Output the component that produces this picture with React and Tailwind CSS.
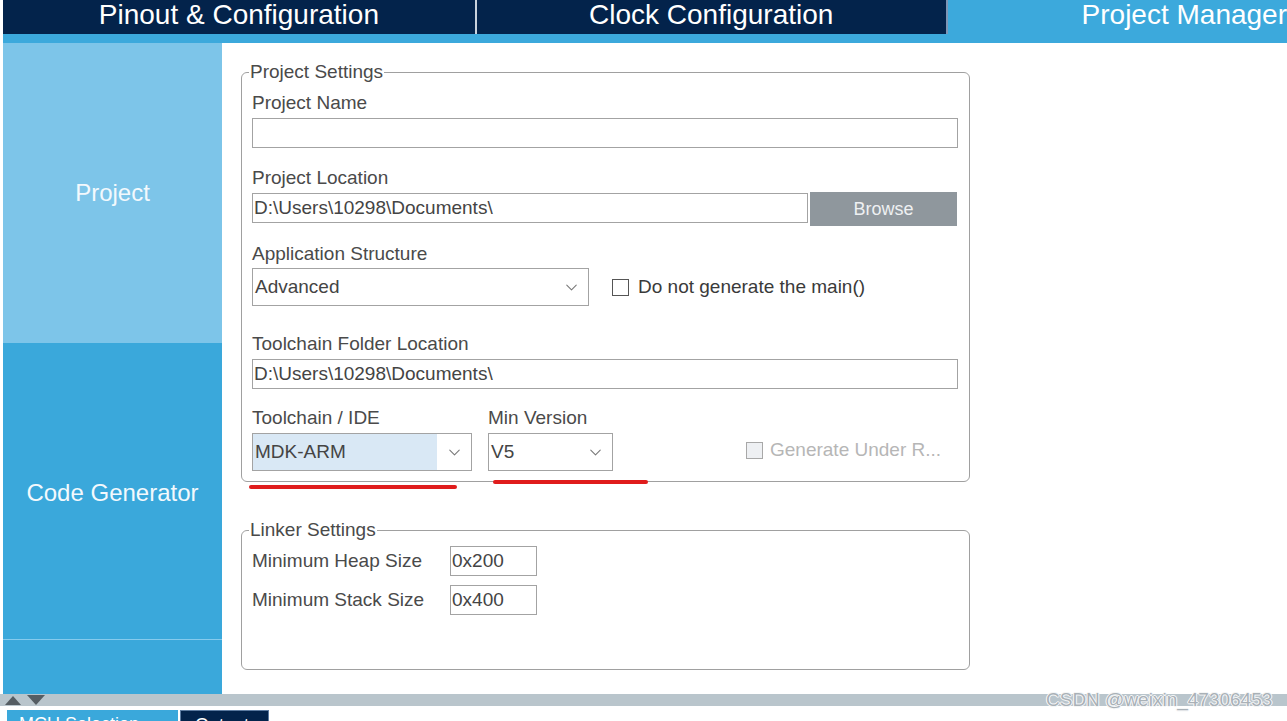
import { ChevronDown } from 'lucide-react'

const font = { fontFamily: '"Liberation Sans", Arial, sans-serif' }

const Field = ({ value = '', className = '' }) => (
  <div className={`h-[30px] border border-[#a3a3a3] bg-white flex items-center px-[1px] text-[19px] text-[#444] ${className}`}>
    {value}
  </div>
)

const Select = ({ value, className = '', fill = '' }) => (
  <div className={`h-[38px] border border-[#a3a3a3] bg-white flex items-stretch text-[19px] text-[#444] ${className}`}>
    <div className={`flex-1 flex items-center pl-[2px] ${fill}`}>{value}</div>
    <div className="w-[34px] flex items-center justify-center">
      <ChevronDown className="w-[19px] h-[19px] text-[#777]" strokeWidth={1.3} />
    </div>
  </div>
)

const Label = ({ children, className = '' }) => (
  <div className={`text-[19px] leading-[22px] text-[#4a4a4a] ${className}`}>{children}</div>
)

export default function App() {
  return (
    <div className="w-[1287px] h-[721px] overflow-hidden relative bg-white flex flex-col" style={font}>
      {/* Top tabs */}
      <div className="flex flex-col pl-[3px] shrink-0">
        <div className="flex h-[34px]">
          <div className="w-[472px] bg-[#03234b] text-white text-[28px] flex items-center justify-center leading-none pb-[5px]">
            Pinout &amp; Configuration
          </div>
          <div className="w-[2px] bg-[#c9d2dc]" />
          <div className="w-[471px] bg-[#03234b] text-white text-[28px] flex items-center justify-center leading-none pb-[5px] border-r-2 border-[#7d95b5]">
            Clock Configuration
          </div>
          <div className="flex-1 bg-[#3ca9dc] text-white text-[28px] flex items-center leading-none pl-[134px] pb-[5px] whitespace-nowrap">
            Project Manager
          </div>
        </div>
        <div className="h-[9px] bg-[#3ca9dc]" />
      </div>

      {/* Body */}
      <div className="flex h-[651px] shrink-0 pl-[3px]">
        {/* Sidebar */}
        <div className="w-[219px] flex flex-col">
          <div className="h-[300px] bg-[#7dc5e9] flex items-center justify-center text-[24px] text-[#f3f9fd]">
            Project
          </div>
          <div className="h-[296px] bg-[#3aa8db] flex items-center justify-center text-[24px] text-[#f3f9fd] pt-[4px]">
            Code Generator
          </div>
          <div className="h-[1px] bg-[#86cbed]" />
          <div className="flex-1 bg-[#3aa8db]" />
        </div>

        {/* Main */}
        <div className="flex-1 pl-[19px] pt-[18px]">
          <fieldset className="w-[729px] h-[421px] border border-[#a0a0a0] rounded-[6px] pl-[10px] pr-[11px] m-0 relative">
            <legend className="text-[19px] leading-[22px] text-[#4a4a4a] px-[1px] ml-[-3px]">Project Settings</legend>

            <Label className="mt-[9px]">Project Name</Label>
            <Field className="mt-[4px]" />

            <Label className="mt-[19px]">Project Location</Label>
            <div className="flex mt-[4px] items-start">
              <Field value="D:\Users\10298\Documents\" className="w-[556px]" />
              <div className="w-[147px] h-[34px] ml-[2px] mt-[-1px] bg-[#8f979d] text-[#eef0f2] text-[18px] flex items-center justify-center">
                Browse
              </div>
            </div>

            <Label className="mt-[17px]">Application Structure</Label>
            <div className="flex items-center mt-[3px]">
              <Select value="Advanced" className="w-[337px]" />
              <div className="ml-[23px] w-[17px] h-[17px] border border-[#555] bg-white" />
              <div className="ml-[9px] text-[19px] text-[#3a3a3a]">Do not generate the main()</div>
            </div>

            <Label className="mt-[27px]">Toolchain Folder Location</Label>
            <Field value="D:\Users\10298\Documents\" className="mt-[4px]" />

            <div className="flex mt-[18px]">
              <div className="flex flex-col">
                <Label>Toolchain / IDE</Label>
                <Select value="MDK-ARM" className="w-[220px] mt-[4px]" fill="bg-[#d9e8f5]" />
              </div>
              <div className="flex flex-col ml-[16px]">
                <Label>Min Version</Label>
                <Select value="V5" className="w-[125px] mt-[4px]" />
              </div>
              <div className="flex items-center ml-[133px] mt-[24px] h-[38px]">
                <div className="w-[17px] h-[17px] border border-[#a8a8a8] bg-[#eef0f3]" />
                <div className="ml-[7px] text-[19px] text-[#b6b6b6] whitespace-nowrap">Generate Under R...</div>
              </div>
            </div>
          </fieldset>

          <fieldset className="w-[729px] h-[151px] mt-[37px] border border-[#a0a0a0] rounded-[6px] pl-[10px] m-0">
            <legend className="text-[19px] leading-[22px] text-[#4a4a4a] px-[1px] ml-[-3px]">Linker Settings</legend>
            <div className="flex items-center mt-[5px]">
              <Label className="w-[198px]">Minimum Heap Size</Label>
              <Field value="0x200" className="w-[87px] h-[29px]" />
            </div>
            <div className="flex items-center mt-[9px]">
              <Label className="w-[198px]">Minimum Stack Size</Label>
              <Field value="0x400" className="w-[87px] h-[29px]" />
            </div>
          </fieldset>
        </div>
      </div>

      {/* Bottom gray bar */}
      <div className="h-[12px] bg-[#b9c5cc] flex items-center pl-[5px] gap-[6px] shrink-0">
        <svg width="16" height="10" viewBox="0 0 16 10"><path d="M0 10 L8 1 L16 10 Z" fill="#555d63" /></svg>
        <svg width="18" height="10" viewBox="0 0 18 10"><path d="M0 0 L18 0 L9 10 Z" fill="#555d63" /></svg>
      </div>
      <div className="h-[4px] shrink-0" />
      <div className="flex pl-[7px] h-[20px] shrink-0">
        <div className="w-[171px] bg-[#3aa8db] text-white text-[18px] leading-none pt-[5px] pl-[12px] whitespace-nowrap">MCU Selection</div>
        <div className="w-[89px] ml-[2px] bg-[#03234b] border border-[#5b7aa0] text-white text-[18px] leading-none pt-[5px] pl-[14px]">Output</div>
      </div>

      {/* Red annotation marks */}
      <div className="absolute left-[249px] top-[485px] w-[208px] h-[4px] rounded-full bg-[#e01c1c]" />
      <div className="absolute left-[493px] top-[480px] w-[155px] h-[4px] rounded-full bg-[#e01c1c]" />

      {/* Watermark */}
      <div
        className="absolute left-[1046px] top-[689px] text-[19px] leading-[22px] text-[#a9b1b7] whitespace-nowrap [text-shadow:0_0_1px_#fff,0_0_1px_#fff,1px_0_0_#f2f4f5,-1px_0_0_#f2f4f5,0_1px_0_#f2f4f5,0_-1px_0_#f2f4f5]"
      >
        CSDN @weixin_47306453
      </div>
    </div>
  )
}
